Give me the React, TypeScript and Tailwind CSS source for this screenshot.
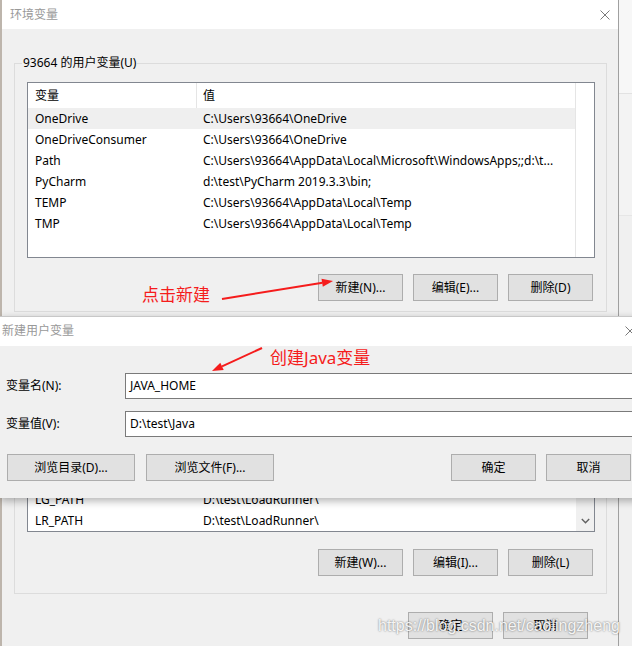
import React from "react"

const FONT = "font-['Noto_Sans','Noto_Sans_CJK_SC',sans-serif]"

const userVars: [string, string][] = [
  ["OneDrive", "C:\\Users\\93664\\OneDrive"],
  ["OneDriveConsumer", "C:\\Users\\93664\\OneDrive"],
  ["Path", "C:\\Users\\93664\\AppData\\Local\\Microsoft\\WindowsApps;;d:\\t..."],
  ["PyCharm", "d:\\test\\PyCharm 2019.3.3\\bin;"],
  ["TEMP", "C:\\Users\\93664\\AppData\\Local\\Temp"],
  ["TMP", "C:\\Users\\93664\\AppData\\Local\\Temp"],
]

// only the last two rows show below the dialog
const sysVars: [string, string][] = [
  ["LG_PATH", "D:\\test\\LoadRunner\\"],
  ["LR_PATH", "D:\\test\\LoadRunner\\"],
]

function CloseX() {
  return (
    <svg width="10" height="10" viewBox="0 0 10 10" className="shrink-0">
      <path d="M0.5 0.5 L9.5 9.5 M9.5 0.5 L0.5 9.5" stroke="#7a7a7a" strokeWidth="1" fill="none" />
    </svg>
  )
}

function Btn({ label, className = "w-[85px]" }: { label: string; className?: string }) {
  return (
    <div
      className={`${className} h-[27px] shrink-0 border border-[#adadad] bg-[#e1e1e1] flex items-center justify-center text-[12px] text-black`}
    >
      {label}
    </div>
  )
}

function Row({ name, value, selected }: { name: string; value: string; selected?: boolean }) {
  return (
    <div className={`flex h-[21px] leading-[21px] shrink-0 text-[12px] text-black ${selected ? "bg-[#efefef]" : ""}`}>
      <div className="w-[169px] pl-[7px] whitespace-nowrap overflow-hidden">{name}</div>
      <div className="flex-1 pl-[6px] whitespace-nowrap overflow-hidden">{value}</div>
    </div>
  )
}

function Header() {
  return (
    <div className="flex h-[25px] shrink-0 items-center text-[12px] text-black bg-white">
      <div className="w-[169px] h-full pl-[7px] flex items-center border-r border-[#e5e5e5]">变量</div>
      <div className="flex-1 h-full pl-[6px] flex items-center">值</div>
    </div>
  )
}

function GroupBox({ label, children, className = "" }: { label?: string; children: React.ReactNode; className?: string }) {
  return (
    <div className={`relative w-[593px] border border-[#dcdcdc] ${className}`}>
      {label && (
        <span className="absolute left-[7px] top-[-9px] px-[1px] bg-[#f0f0f0] text-[12px] leading-[16px] text-black">
          {label}
        </span>
      )}
      {children}
    </div>
  )
}

export default function App() {
  return (
    <div className={`relative w-[632px] h-[646px] overflow-hidden bg-[#f0f0f0] flex ${FONT}`}>
      {/* window behind, left edge */}
      <div className="w-[2px] shrink-0 bg-[#bdb5ac]" />

      {/* 环境变量 window */}
      <div className="w-[617px] shrink-0 flex flex-col bg-[#f0f0f0] border-r border-[#a0a0a0]">
        <div className="h-[29px] shrink-0 bg-white flex items-center justify-between pl-[8px] pr-[8px]">
          <span className="text-[12px] text-[#999999]">环境变量</span>
          <CloseX />
        </div>

        <div className="flex-1 flex flex-col pl-[12px] pt-[34px]">
          <GroupBox label="93664 的用户变量(U)">
            <div className="ml-[12px] mt-[18px] w-[568px] h-[176px] border border-[#828790] bg-white flex">
              <div className="w-[548px] flex flex-col border-r border-[#e5e5e5]">
                <Header />
                {userVars.map(([n, v], i) => (
                  <Row key={n} name={n} value={v} selected={i === 0} />
                ))}
              </div>
              <div className="flex-1 bg-white" />
            </div>
            <div className="flex justify-end gap-[10px] mt-[16px] pr-[13px] pb-[10px]">
              <Btn label="新建(N)..." />
              <Btn label="编辑(E)..." />
              <Btn label="删除(D)" />
            </div>
          </GroupBox>

          <GroupBox className="mt-[15px]">
            <div className="ml-[12px] mt-[18px] w-[568px] h-[186px] border border-[#828790] bg-white flex">
              <div className="w-[548px] flex flex-col justify-end overflow-hidden">
                {sysVars.map(([n, v]) => (
                  <Row key={n} name={n} value={v} />
                ))}
              </div>
              <div className="flex-1 bg-[#f0f0f0] flex flex-col justify-end items-center pb-[7px]">
                <svg width="9" height="6" viewBox="0 0 9 6">
                  <path d="M0.8 1 L4.5 4.7 L8.2 1" stroke="#606060" strokeWidth="1.4" fill="none" />
                </svg>
              </div>
            </div>
            <div className="flex justify-end gap-[10px] mt-[17px] pr-[13px] pb-[17px]">
              <Btn label="新建(W)..." />
              <Btn label="编辑(I)..." />
              <Btn label="删除(L)" />
            </div>
          </GroupBox>

          <div className="flex justify-end gap-[10px] mt-[18px] pr-[30px]">
            <Btn label="确定" />
            <Btn label="取消" />
          </div>
        </div>
      </div>

      {/* whatever sits to the right */}
      <div className="flex-1 flex flex-col">
        <div className="h-[94px] bg-[#f7f7f7] border-b border-[#e2e2e2]" />
        <div className="h-[122px] bg-[#f3f3f3] border-b border-[#e6e6e6]" />
        <div className="flex-1 bg-[#f0f0f0]" />
      </div>

      {/* 新建用户变量 dialog */}
      <div className="absolute left-0 top-[316px] w-[650px] flex flex-col shadow-[0_3px_8px_rgba(0,0,0,0.3)] border-t border-[#c8c8c8]">
        <div className="h-[29px] bg-white flex items-center justify-between pl-[2px] pr-[15px] pb-[1px]">
          <span className="text-[12px] text-[#999999]">新建用户变量</span>
          <CloseX />
        </div>
        <div className="h-[152px] bg-[#f0f0f0] pt-[27px] flex flex-col text-[12px] text-black">
          <div className="flex items-center pr-[10px]">
            <div className="w-[125px] pl-[6px]">变量名(N):</div>
            <div className="flex-1 h-[26px] border border-[#7a7a7a] bg-white pl-[4px] pb-[1px] flex items-center">JAVA_HOME</div>
          </div>
          <div className="flex items-center pr-[10px] mt-[12px]">
            <div className="w-[125px] pl-[6px]">变量值(V):</div>
            <div className="flex-1 h-[26px] border border-[#7a7a7a] bg-white pl-[4px] pb-[1px] flex items-center">
              {"D:\\test\\Java"}
            </div>
          </div>
          <div className="flex items-center mt-[17px] pl-[7px] pr-[19px]">
            <Btn label="浏览目录(D)..." className="w-[128px]" />
            <Btn label="浏览文件(F)..." className="w-[128px] ml-[11px]" />
            <div className="flex-1" />
            <Btn label="确定" />
            <Btn label="取消" className="w-[85px] ml-[10px]" />
          </div>
        </div>
      </div>

      {/* red annotations */}
      <span className="absolute left-[142px] top-[285px] text-[17px] leading-[20px] text-[#f51c1c] whitespace-nowrap">
        点击新建
      </span>
      <span className="absolute left-[270px] top-[348px] text-[17px] leading-[20px] text-[#f51c1c] whitespace-nowrap">
        创建Java变量
      </span>
      <svg className="absolute left-0 top-0 pointer-events-none" width="632" height="646" viewBox="0 0 632 646">
        <line x1="222" y1="299" x2="322.5" y2="282.8" stroke="#f51c1c" strokeWidth="2" />
        <polygon points="333,281 322.8,286.7 321.5,278.8" fill="#f51c1c" />
        <line x1="262" y1="348" x2="222" y2="366.4" stroke="#f51c1c" strokeWidth="2" />
        <polygon points="212,371 223.7,370 220.3,362.8" fill="#f51c1c" />
      </svg>

      {/* watermark */}
      <span className="absolute left-[378px] top-[616px] font-['Liberation_Sans',Arial,sans-serif] text-[16px] leading-[20px] text-white/90 [text-shadow:0_0_2px_rgba(0,0,0,0.6)] whitespace-nowrap pointer-events-none">
        https://blog.csdn.net/caolingzheng
      </span>
    </div>
  )
}
